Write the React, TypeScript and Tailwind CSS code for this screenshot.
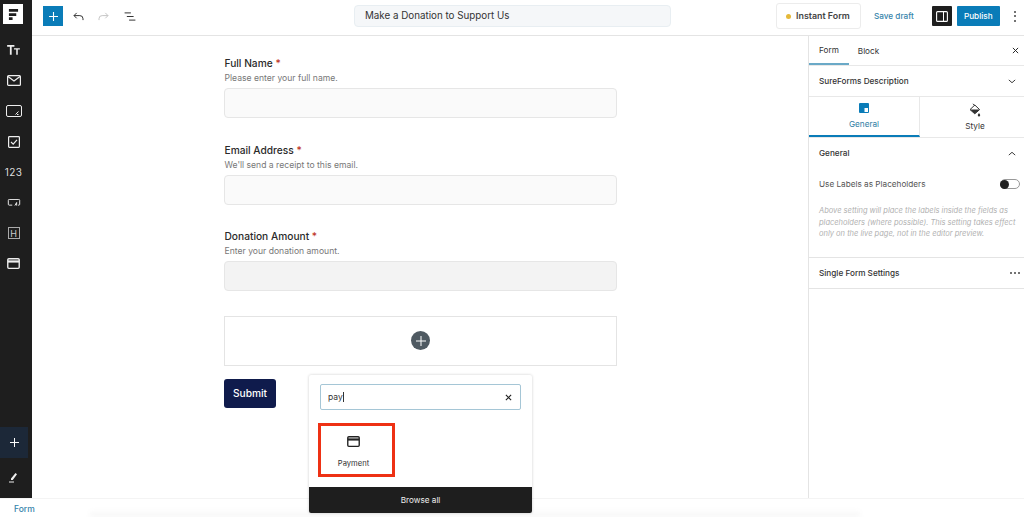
function SidebarIcon({ children }: { children: React.ReactNode }) {
  return <div className="flex h-[30.6px] w-[27px] items-center justify-center text-[#eeeeee]">{children}</div>
}

function CardIcon({ className = "" }: { className?: string }) {
  return (
    <svg viewBox="0 0 14 12" className={className} fill="none">
      <rect x="0.75" y="0.75" width="12.5" height="10.5" rx="1.2" stroke="currentColor" strokeWidth="1.5" />
      <rect x="1" y="2.6" width="12" height="2.4" fill="currentColor" />
    </svg>
  )
}

function Sidebar() {
  return (
    <aside className="flex w-8 shrink-0 flex-col bg-[#1e1e1e]">
      <div className="ml-[3px] mt-[4px] flex h-5 w-5 items-center justify-center bg-white">
        <svg viewBox="0 0 12 14" className="h-[13px] w-[11px]" fill="#1e1e1e">
          <path d="M1 1h10v3H1zM1 5.5h8v3H1zM1 10h4v3H1z" />
        </svg>
      </div>
      <div className="mt-[10.5px] flex flex-col">
        <SidebarIcon>
          <svg viewBox="0 0 14 11" className="h-[10px] w-[13px]" fill="currentColor">
            <path d="M0 0h8v1.8H5v9H3v-9H0zM7.5 3.5H14v1.5h-2.3v5.8H10V5H7.5z" />
          </svg>
        </SidebarIcon>
        <SidebarIcon>
          <svg viewBox="0 0 14 11" className="h-[11px] w-[14px]" fill="none" stroke="currentColor" strokeWidth="1.2">
            <rect x="0.6" y="0.6" width="12.8" height="9.8" rx="1" />
            <path d="M1 1.5l6 4.5 6-4.5" />
          </svg>
        </SidebarIcon>
        <SidebarIcon>
          <svg viewBox="0 0 16 12" className="h-[12px] w-[16px]" fill="none" stroke="currentColor" strokeWidth="1">
            <rect x="0.5" y="0.5" width="15" height="11" rx="1.5" />
            <path d="M9.5 9.5l3-3M12.5 9.5h-1.5" />
          </svg>
        </SidebarIcon>
        <SidebarIcon>
          <svg viewBox="0 0 12 12" className="h-[12px] w-[12px]" fill="none" stroke="currentColor" strokeWidth="1.2">
            <rect x="0.6" y="0.6" width="10.8" height="10.8" rx="0.8" />
            <path d="M3 6l2.2 2.2L9 3.8" />
          </svg>
        </SidebarIcon>
        <SidebarIcon>
          <span className="text-[10px] font-normal leading-none tracking-[0.4px] text-[#dddddd]">123</span>
        </SidebarIcon>
        <SidebarIcon>
          <svg viewBox="0 0 14 8" className="h-[7px] w-[14px]" fill="none" stroke="currentColor" strokeWidth="1.1">
            <path d="M5 7H1.5a1 1 0 0 1-1-1V1.5a1 1 0 0 1 1-1h11a1 1 0 0 1 1 1V6a1 1 0 0 1-1 1h-1" />
            <path d="M8 7.5l2-3.5v3.5" />
          </svg>
        </SidebarIcon>
        <SidebarIcon>
          <div className="flex h-[12px] w-[12px] items-center justify-center border border-[#aaaaaa] text-[9px] leading-none text-[#cccccc]">H</div>
        </SidebarIcon>
        <SidebarIcon>
          <CardIcon className="h-[11px] w-[13px]" />
        </SidebarIcon>
      </div>
      <div className="mt-auto flex h-[31px] w-[28px] items-center justify-center bg-[#1c2838] text-white">
        <svg viewBox="0 0 10 10" className="h-[9px] w-[9px]" stroke="currentColor" strokeWidth="1.1">
          <path d="M5 0v10M0 5h10" />
        </svg>
      </div>
      <div className="mb-[15px] ml-[8px] mt-[14px] text-[#eeeeee]">
        <svg viewBox="0 0 10 11" className="h-[11px] w-[10px]" fill="currentColor">
          <path d="M3 6.5L7.5 1 9 2.2 4.8 8H3zM1 9.5h5v1H1z" />
        </svg>
      </div>
    </aside>
  )
}

function TopBar() {
  return (
    <header className="flex h-9 shrink-0 items-center border-b border-[#e4e4e4] bg-white pb-[3px]">
      <button className="ml-[11px] flex h-5 w-5 items-center justify-center bg-[#0a7cb8] text-white">
        <svg viewBox="0 0 10 10" className="h-[9px] w-[9px]" stroke="currentColor" strokeWidth="1.2">
          <path d="M5 0v10M0 5h10" />
        </svg>
      </button>
      <svg viewBox="0 0 12 10" className="ml-[10px] h-[9px] w-[11px] text-[#333333]" fill="none" stroke="currentColor" strokeWidth="1.1">
        <path d="M4 1L1 4l3 3M1 4h6.5A3.5 3.5 0 0 1 11 7.5V9" />
      </svg>
      <svg viewBox="0 0 12 10" className="ml-[14px] h-[9px] w-[11px] text-[#c4c4c4]" fill="none" stroke="currentColor" strokeWidth="1.1">
        <path d="M8 1l3 3-3 3M11 4H4.5A3.5 3.5 0 0 0 1 7.5V9" />
      </svg>
      <svg viewBox="0 0 12 10" className="ml-[15px] h-[9px] w-[12px] text-[#333333]" stroke="currentColor" strokeWidth="1.1">
        <path d="M0 1h7M2.5 5H10M5 9h7" />
      </svg>
      <div className="ml-[218px] flex h-[22px] w-[317px] items-center rounded-[4px] border border-[#e8eef2] bg-[#f5f7f9] pl-[10px] text-[9.8px] text-[#333333]">
        Make a Donation to Support Us
      </div>
      <div className="ml-[105px] flex h-[26px] w-[85px] items-center rounded-[3px] border border-[#ececec] pl-[9px] text-[8.9px] font-semibold text-[#444444]">
        <span className="mr-[5px] h-[5px] w-[5px] rounded-full bg-[#e5b93a]" />
        Instant Form
      </div>
      <span className="ml-[13px] text-[8.2px] font-medium text-[#3584ab]">Save draft</span>
      <div className="ml-[18px] flex h-5 w-5 items-center justify-center rounded-[1px] bg-[#1e1e1e]">
        <svg viewBox="0 0 12 11" className="h-[11px] w-[12px]" fill="none" stroke="#ffffff" strokeWidth="1.1">
          <rect x="0.6" y="0.6" width="10.8" height="9.8" rx="1" />
          <rect x="7" y="1" width="1" height="9" fill="#ffffff" stroke="none" />
        </svg>
      </div>
      <button className="ml-[5px] h-5 w-[43px] rounded-[1px] bg-[#0a7cb8] text-[8.2px] font-medium text-white">Publish</button>
      <div className="ml-[14px] flex flex-col gap-[2.5px]">
        <span className="h-[2px] w-[2px] rounded-full bg-[#444444]" />
        <span className="h-[2px] w-[2px] rounded-full bg-[#444444]" />
        <span className="h-[2px] w-[2px] rounded-full bg-[#444444]" />
      </div>
    </header>
  )
}

function Field({ label, hint, tone = "bg-[#fafafa]" }: { label: string; hint: string; tone?: string }) {
  return (
    <div className="mb-[24.5px] pl-[0.5px]">
      <div className="h-[15px] text-[10.2px] font-medium leading-[15px] text-[#2a2a2a]">
        {label} <span className="text-[#c0392b]">*</span>
      </div>
      <div className="mt-[1px] h-[13px] text-[8.6px] leading-[13px] text-[#777777]">{hint}</div>
      <div className={`mt-[3px] -ml-[0.5px] h-[30px] rounded-[4px] border border-[#e6e6e6] ${tone}`} />
    </div>
  )
}

function Inserter() {
  return (
    <div className="absolute left-[277px] top-[339px] z-10 flex h-[138px] w-[223px] flex-col rounded-[2px] bg-white shadow-[0_0_3px_rgba(0,0,0,0.2)]">
      <div className="mx-[11px] mt-[9px] flex h-[26px] items-center justify-between rounded-[2px] border border-[#a5c6d6] pl-[7px] pr-[8px] text-[8.5px] text-[#333333]">
        <span>
          pay<span className="ml-[0.5px] inline-block h-[10px] w-px translate-y-[2px] bg-[#333333]" />
        </span>
        <svg viewBox="0 0 8 8" className="h-[7px] w-[7px]" stroke="#222222" strokeWidth="1.3">
          <path d="M1 1l6 6M7 1l-6 6" />
        </svg>
      </div>
      <div className="ml-[9px] mt-[13px] flex h-[54px] w-[77px] flex-col items-center border-[3px] border-[#ee3114] pr-[6px] pt-[10px]">
        <CardIcon className="h-[11px] w-[13px] text-[#222222]" />
        <span className="mt-[11px] text-[7.6px] leading-[12px] text-[#333333]">Payment</span>
      </div>
      <div className="mt-auto flex h-[26px] items-center justify-center rounded-b-[2px] bg-[#1e1e1e] text-[8.2px] text-[#eeeeee]">Browse all</div>
    </div>
  )
}

function Canvas() {
  return (
    <main className="relative flex-1 bg-white pl-[192px] pt-[20px]">
      <div className="w-[393px]">
        <Field label="Full Name" hint="Please enter your full name." />
        <Field label="Email Address" hint="We'll send a receipt to this email." />
        <Field label="Donation Amount" hint="Enter your donation amount." tone="bg-[#f3f3f3]" />
        <div className="flex h-[50px] items-center justify-center border border-[#e4e4e4]">
          <div className="flex h-[19px] w-[19px] items-center justify-center rounded-full bg-[#4f5a62]">
            <svg viewBox="0 0 10 10" className="h-[10px] w-[10px]" stroke="#ffffff" strokeWidth="1">
              <path d="M5 0v10M0 5h10" />
            </svg>
          </div>
        </div>
        <button className="mt-[13.5px] h-[29px] w-[52px] rounded-[3px] bg-[#0f1b4c] pt-[1px] text-[10.2px] font-medium text-white">Submit</button>
      </div>
      <Inserter />
    </main>
  )
}

function SettingsPanel() {
  return (
    <section className="flex w-[216px] shrink-0 flex-col border-l border-[#e4e4e4] bg-white text-[#333333]">
      <div className="flex h-[30px] items-end border-b border-[#e8e8e8] text-[8.2px]">
        <div className="flex h-full w-10 items-center justify-center border-b-2 border-[#6aa9c7] pt-[2px]">Form</div>
        <div className="flex h-full w-[39px] items-center justify-center pt-[2px]">Block</div>
        <svg viewBox="0 0 8 8" className="mb-[11px] ml-auto mr-[5px] h-[7px] w-[7px]" stroke="#222222" strokeWidth="1.1">
          <path d="M1 1l6 6M7 1l-6 6" />
        </svg>
      </div>
      <div className="flex h-[31px] items-center justify-between border-b border-[#e8e8e8] pl-[10px] pr-[8px] text-[8.2px] font-medium">
        SureForms Description
        <svg viewBox="0 0 10 6" className="h-[5px] w-[8px]" fill="none" stroke="#333333" strokeWidth="1.2">
          <path d="M1 1l4 3.5L9 1" />
        </svg>
      </div>
      <div className="flex h-[41px] border-b border-[#e8e8e8] text-[8.2px]">
        <div className="flex w-[111px] flex-col items-center justify-center border-b-2 border-r border-[#0a7cb8] border-r-[#e8e8e8] pt-[2px] text-[#2f7da4]">
          <svg viewBox="0 0 10 10" className="mb-[5px] h-[10px] w-[10px]">
            <rect width="10" height="10" rx="1" fill="#0a7cb8" />
            <rect x="5.5" y="5" width="3.5" height="4" fill="#ffffff" />
          </svg>
          General
        </div>
        <div className="flex flex-1 flex-col items-center justify-center pl-[6px] pt-[1px]">
          <svg viewBox="0 0 12 15" className="mb-[2px] h-[15px] w-[12px]">
            <path d="M5.8 2L10.6 6.6 5.8 10.8 1 6.6z" fill="none" stroke="#333333" strokeWidth="1" />
            <path d="M1 6.6h9.6L5.8 10.8z" fill="#333333" />
            <path d="M4 0.8l1.8 2" stroke="#333333" strokeWidth="1" />
            <path d="M10 10c.7 1 1.2 1.6 1.2 2.3a1.2 1.2 0 0 1-2.4 0c0-.7.5-1.3 1.2-2.3z" fill="#333333" />
          </svg>
          Style
        </div>
      </div>
      <div className="flex h-[120px] flex-col border-b border-[#e4e4e4] pl-[10px] pr-[4px]">
        <div className="flex items-center justify-between pr-[4px] pt-[9px] text-[8.2px] font-medium leading-[12px]">
          General
          <svg viewBox="0 0 10 6" className="h-[5px] w-[8px]" fill="none" stroke="#333333" strokeWidth="1.2">
            <path d="M1 5l4-3.5L9 5" />
          </svg>
        </div>
        <div className="mt-[19px] flex items-center justify-between text-[8.2px] leading-[12px] text-[#555555]">
          Use Labels as Placeholders
          <div className="flex h-[10px] w-[20px] items-center rounded-full border border-[#999999] bg-white">
            <span className="-ml-px h-[9px] w-[9px] rounded-full bg-[#222222]" />
          </div>
        </div>
        <p className="mt-[15px] text-[7.5px] italic leading-[11.5px] text-[#b0b0b0]">
          Above setting will place the labels inside the fields as placeholders (where possible). This setting takes effect only on the live page, not in the editor preview.
        </p>
      </div>
      <div className="flex h-[31px] items-center justify-between border-b border-[#e4e4e4] pl-[10px] pr-[4px] text-[8.2px] font-medium">
        Single Form Settings
        <div className="flex gap-[2px]">
          <span className="h-[2px] w-[2px] rounded-full bg-[#444444]" />
          <span className="h-[2px] w-[2px] rounded-full bg-[#444444]" />
          <span className="h-[2px] w-[2px] rounded-full bg-[#444444]" />
        </div>
      </div>
    </section>
  )
}

export default function App() {
  return (
    <div className="flex h-[517px] w-[1024px] flex-col overflow-hidden bg-white font-['Inter',sans-serif]">
      <div className="flex h-[498px] min-h-0">
        <Sidebar />
        <div className="flex min-w-0 flex-1 flex-col">
          <TopBar />
          <div className="flex min-h-0 flex-1">
            <Canvas />
            <SettingsPanel />
          </div>
        </div>
      </div>
      <footer className="relative flex flex-1 items-center border-t border-[#f4f4f4] bg-white pl-[14px] pt-[3px] text-[8.5px] font-medium text-[#3584ab]">
        Form
        <div className="absolute bottom-0 left-[90px] h-[8px] w-[770px] bg-gradient-to-b from-white to-[#f5f5f5] blur-[2px]" />
      </footer>
    </div>
  )
}
